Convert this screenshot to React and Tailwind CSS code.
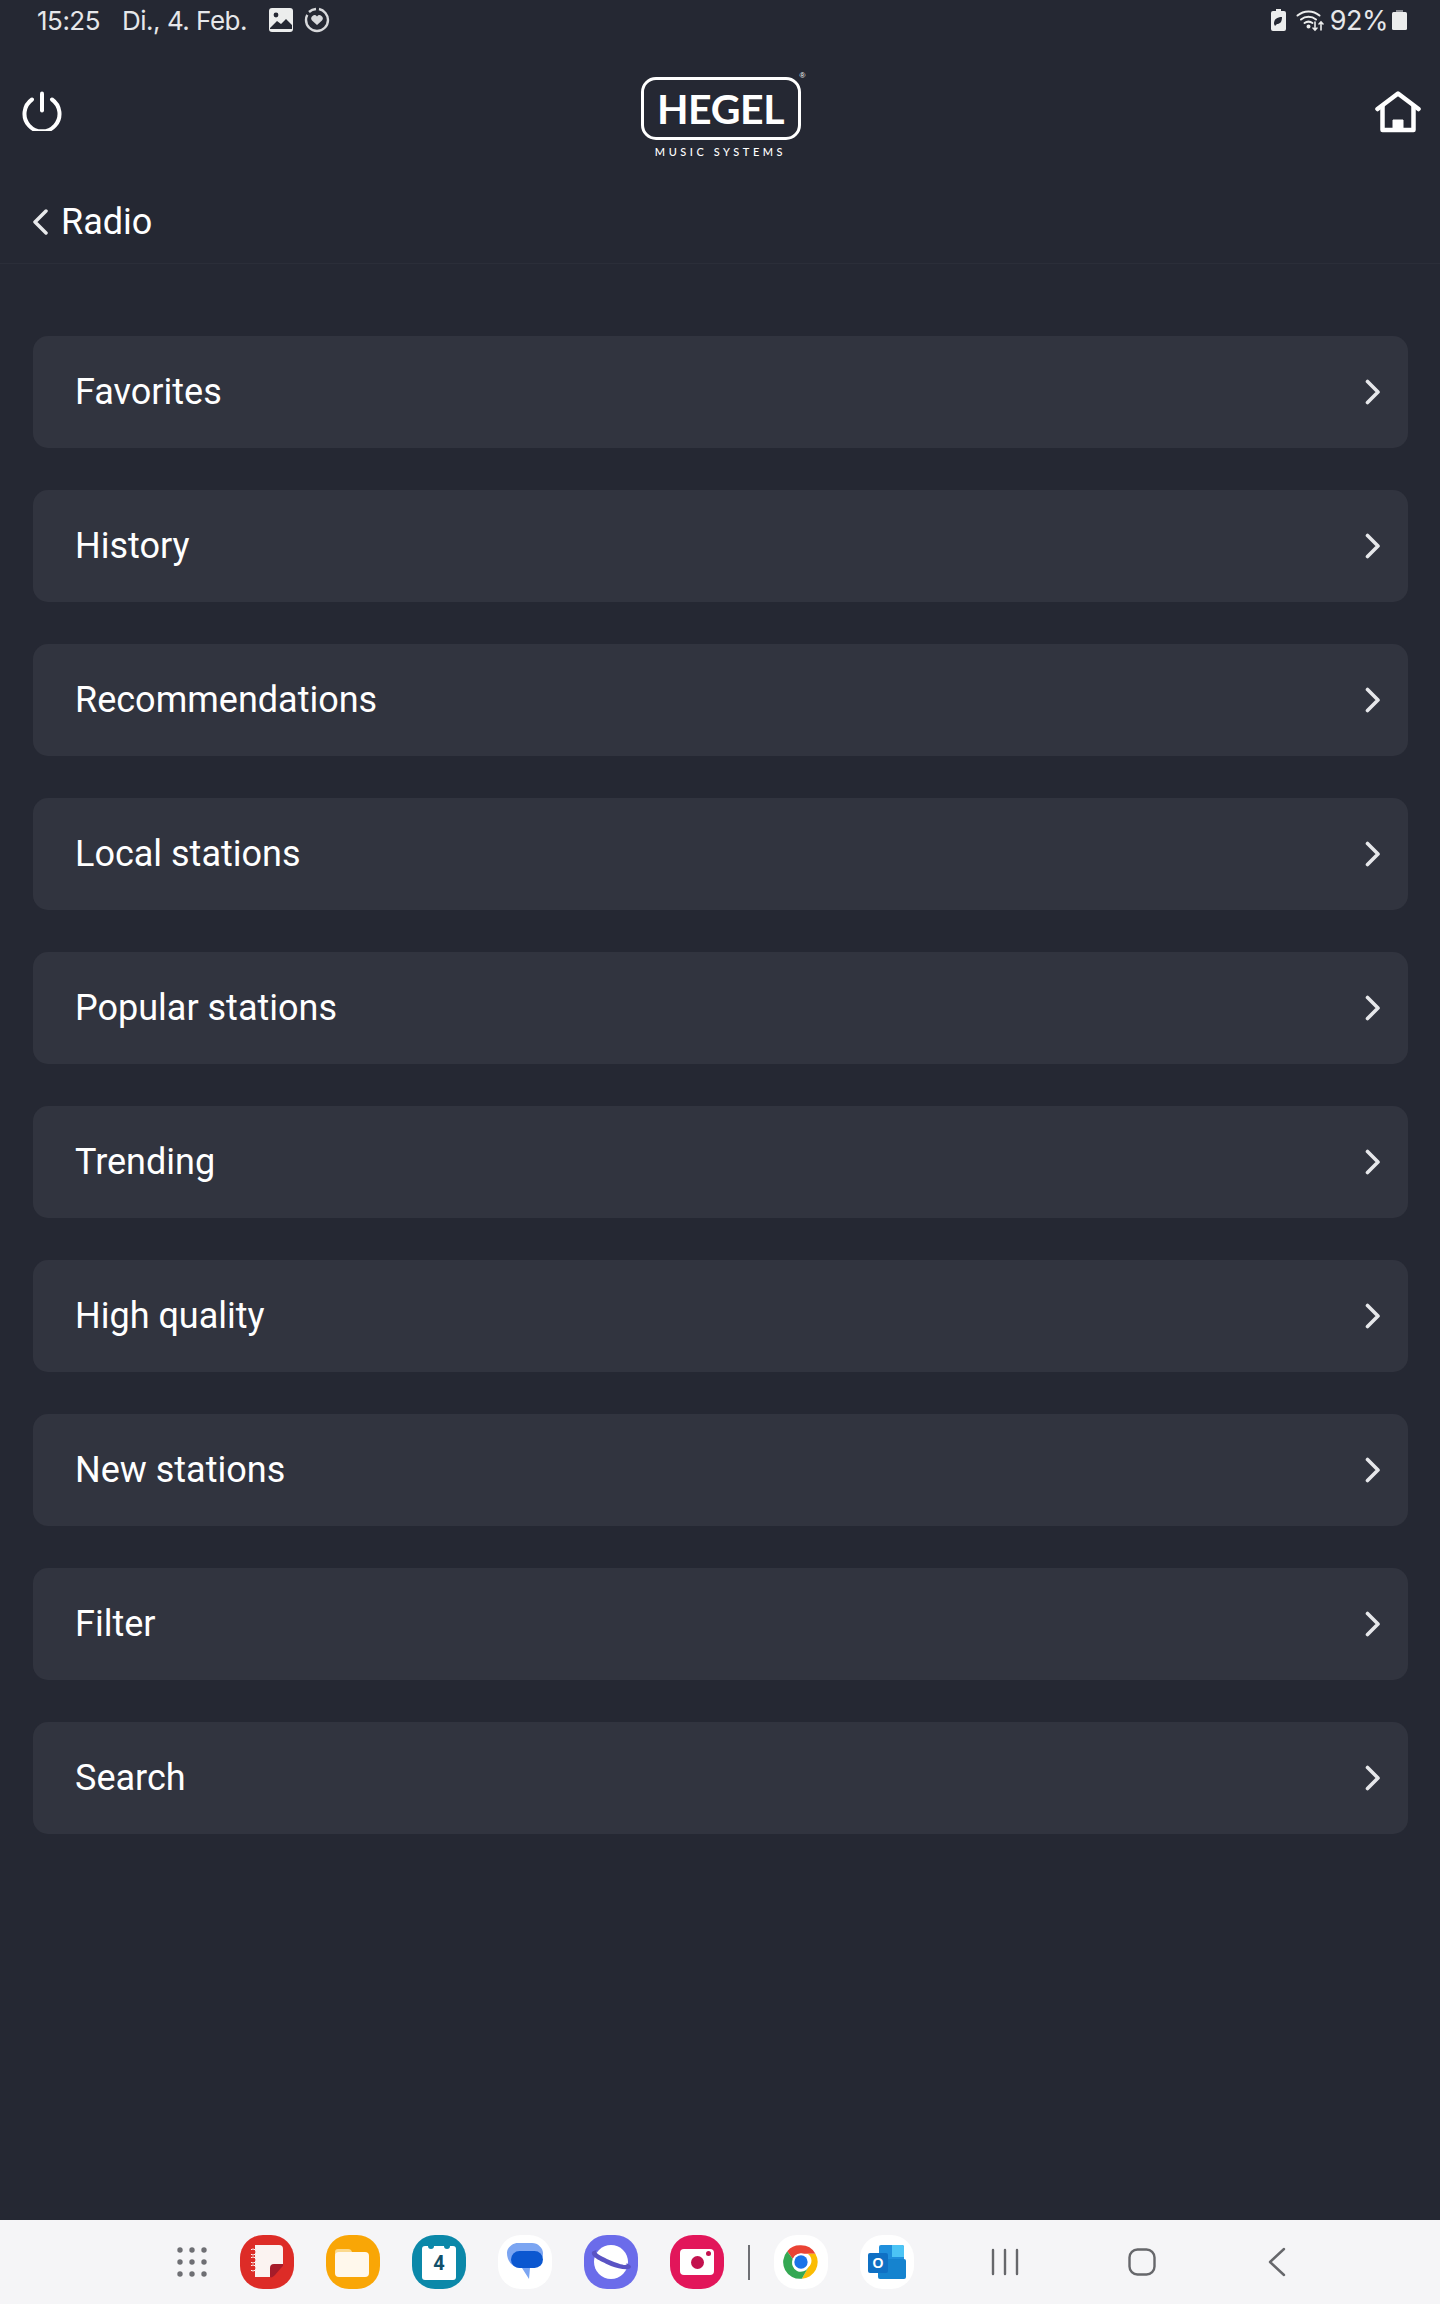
// App.jsx
const MENU_ITEMS = [
  "Favorites",
  "History",
  "Recommendations",
  "Local stations",
  "Popular stations",
  "Trending",
  "High quality",
  "New stations",
  "Filter",
  "Search",
];

function Squircle({ className, children }) {
  return (
    <div className={`w-[54px] h-[54px] rounded-[23px] flex items-center justify-center shrink-0 ${className}`}>
      {children}
    </div>
  );
}

function StatusBar() {
  return (
    <div className="h-[40px] flex items-center justify-between pl-[37px] pr-[33px] text-[#e6e7ea] text-[26px] font-['Inter','Roboto',sans-serif] tracking-[-0.5px]">
      <div className="flex items-center">
        <span>15:25</span>
        <span className="ml-[22px]">Di., 4. Feb.</span>
        <svg className="ml-[22px]" width="24" height="24" viewBox="0 0 24 24">
          <rect width="24" height="24" rx="3" fill="#eceded" />
          <circle cx="7" cy="7" r="2.400" fill="#252833" />
          <path d="M1 20l7-7 4 3 5-5 6 6v4H1z" fill="#252833" />
        </svg>
        <svg className="ml-[11px]" width="26" height="26" viewBox="0 0 26 26" fill="none">
          <path d="M5 5a11.500 11.500 0 0 1 7-3M15 2a11.500 11.500 0 0 1 9 11c0 6-5 11-11 11S2 19 2 13c0-2 .4-3.700 1.300-5.200" stroke="#d8d9dc" strokeWidth="2.400" />
          <path d="M13 18l-5-4.500a3 3 0 0 1 5-4 3 3 0 0 1 5 4z" fill="#d8d9dc" />
        </svg>
      </div>
      <div className="flex items-center">
        <svg width="15" height="22" viewBox="0 0 15 22">
          <path d="M5 0h5v2h3a2 2 0 0 1 2 2v16a2 2 0 0 1-2 2H2a2 2 0 0 1-2-2V4a2 2 0 0 1 2-2h3z" fill="#eceded" />
          <path d="M3 15c0-5 3-7 8-7 0 5-2 7-5 7l-2 2z" fill="#252833" />
        </svg>
        <svg className="ml-[10px]" width="29" height="24" viewBox="0 0 29 24" fill="none" stroke="#eceded" strokeLinecap="round">
          <path d="M1.500 7.500a17 17 0 0 1 22 0M5 11.500a12 12 0 0 1 15 0M8.500 15a7 7 0 0 1 8 0" strokeWidth="2" />
          <circle cx="12.500" cy="18.500" r="1" strokeWidth="2" />
          <path d="M19 14v8M17 20l2 2 2-2M25 22v-8M23 16l2-2 2 2" strokeWidth="1.600" />
        </svg>
        <span className="ml-[5px] text-[27px] leading-[40px] pt-[1px]">92%</span>
        <svg className="ml-[4px]" width="15" height="20" viewBox="0 0 15 20">
          <path d="M4 0h7v2H4z" fill="#8d8f95" />
          <rect y="2" width="15" height="18" rx="1.500" fill="#eceded" />
        </svg>
      </div>
    </div>
  );
}

function TopBar() {
  return (
    <div className="h-[140px] flex items-start justify-between pl-[22px] pr-[19px]">
      <svg className="mt-[51px]" width="40" height="40" viewBox="0 0 40 40" fill="none" stroke="#fff" strokeWidth="4" strokeLinecap="round">
        <path d="M20 2.500v17" />
        <path d="M10 8.500a17.500 17.500 0 1 0 20 0" />
      </svg>
      <div className="mt-[37px] relative w-[160px] flex flex-col items-center ml-[4px]">
        <div className="w-[160px] h-[63px] rounded-[15px] border-[3px] border-white flex items-center justify-center">
          <span className="font-['Lato',sans-serif] font-bold text-white text-[41px] leading-none tracking-[-0.4px]">HEGEL</span>
        </div>
        <span className="absolute -top-[5px] -right-[5px] text-white text-[8px] leading-none font-['Liberation_Sans',sans-serif]">®</span>
        <span className="mt-[5px] font-['Lato',sans-serif] font-medium text-white text-[11px] leading-[14px] tracking-[3.550px] whitespace-nowrap">MUSIC SYSTEMS</span>
      </div>
      <svg className="mt-[51px]" width="46" height="42" viewBox="0 0 46 42" fill="none" stroke="#fff" strokeWidth="4.500" strokeLinejoin="round" strokeLinecap="round">
        <path d="M2.500 18L23 2.500 43.500 18" />
        <path d="M7.500 15v24h31V15" />
        <path d="M18 39V29h10v10z" fill="#fff" strokeWidth="1" />
      </svg>
    </div>
  );
}

function BackBar() {
  return (
    <div className="h-[84px] flex items-center border-b border-[#2b2e39]">
      <svg className="ml-[32px]" width="16" height="26" viewBox="0 0 16 26" fill="none" stroke="#e8e9eb" strokeWidth="3.500" strokeLinecap="round" strokeLinejoin="round">
        <path d="M14 2L3 13l11 11" />
      </svg>
      <span className="ml-[13px] text-white text-[36px] font-['Roboto',sans-serif]">Radio</span>
    </div>
  );
}

function MenuRow({ label }) {
  return (
    <div className="h-[112px] rounded-[15px] bg-[#31343f] flex items-center justify-between pl-[42px] pr-[27px]">
      <span className="text-white text-[36px] font-['Roboto',sans-serif]">{label}</span>
      <svg width="16" height="26" viewBox="0 0 16 26" fill="none" stroke="#e6e7ea" strokeWidth="3.600" strokeLinecap="round" strokeLinejoin="round">
        <path d="M2.500 2.500L13 13 2.500 23.500" />
      </svg>
    </div>
  );
}

function AppsGrid() {
  return (
    <svg width="30" height="30" viewBox="0 0 30 30" fill="#6e6f74" className="shrink-0">
      {[3, 15, 27].map((y) =>
        [3, 15, 27].map((x) => <circle key={`${x}-${y}`} cx={x} cy={y} r="2.700" />)
      )}
    </svg>
  );
}

function NavBar() {
  return (
    <div className="h-[84px] bg-[#f5f5f7] flex items-center pl-[177px]">
      <AppsGrid />
      <Squircle className="ml-[33px] bg-[#dd2c27]">
        <svg width="32" height="34" viewBox="0 0 32 34">
          <path d="M4 0h24a4 4 0 0 1 4 4v15L19 32H4z" fill="#fbf3f1" />
          <path d="M32 19H23a4 4 0 0 0-4 4v9c1 1 3 0 5-2l6-7c2-2 3-3 2-4z" fill="#a61c2a" />
          <circle cx="2" cy="7" r="3" fill="#dd2c27" stroke="#fbf3f1" strokeWidth="1" />
          <circle cx="2" cy="15" r="3" fill="#dd2c27" stroke="#fbf3f1" strokeWidth="1" />
          <circle cx="2" cy="23" r="3" fill="#dd2c27" stroke="#fbf3f1" strokeWidth="1" />
        </svg>
      </Squircle>
      <Squircle className="ml-[32px] bg-[#f9a606]">
        <svg width="36" height="30" viewBox="0 0 36 30">
          <path d="M0 5a3 3 0 0 1 3-3h10a4 4 0 0 1 4 3v3H0z" fill="#fcd98c" />
          <rect y="5" width="34" height="25" rx="4" fill="#fff8ec" />
        </svg>
      </Squircle>
      <Squircle className="ml-[32px] bg-[#0b88a9]">
        <div className="relative w-[34px] h-[34px] mt-[2px] rounded-[3px] bg-white flex items-center justify-center">
          <span className="text-[#11506b] text-[20px] font-bold font-['Roboto',sans-serif]">4</span>
          <span className="absolute -top-[1px] left-[6px] w-[6px] h-[4px] rounded-b-full bg-[#0b88a9]" />
          <span className="absolute -top-[1px] right-[6px] w-[6px] h-[4px] rounded-b-full bg-[#0b88a9]" />
        </div>
      </Squircle>
      <Squircle className="ml-[32px] bg-white">
        <svg width="38" height="38" viewBox="0 0 38 38">
          <path d="M12 0h14c6 0 11 5 11 10 0 8-5 15-11 15h-2l-1 11-7-11h-2C8 25 1 19 1 10 1 5 6 0 12 0z" fill="#7ba5f2" />
          <rect x="5" y="8" width="32" height="17" rx="8.500" fill="#0b57d0" />
        </svg>
      </Squircle>
      <Squircle className="ml-[32px] bg-[#6b6cea]">
        <svg width="42" height="36" viewBox="0 0 42 36">
          <circle cx="21" cy="18" r="17" fill="#fff" />
          <path d="M2 8c-2 5 11 10 19 14 8 3 19 5 20 1 0-2-3-3-5-4 1 1 1 2-1 2-5 0-27-9-29-13 0-1 0-2 2-2-3 0-5 1-6 2z" fill="#5a53c4" />
        </svg>
      </Squircle>
      <Squircle className="ml-[32px] bg-[#e2165a]">
        <div className="relative w-[34px] h-[26px] rounded-[4px] bg-white flex items-center justify-center">
          <span className="w-[13px] h-[13px] rounded-full bg-[#c3124e]" />
          <span className="absolute top-[2px] right-[3px] w-[5px] h-[5px] rounded-full bg-[#c3124e]" />
        </div>
      </Squircle>
      <div className="ml-[24px] w-[2px] h-[35px] bg-[#6e6f74]" />
      <Squircle className="ml-[24px] bg-white">
        <svg width="40" height="40" viewBox="0 0 48 48">
          <path d="M24 4a20 20 0 0 1 17.320 10H24a10 10 0 0 0-9.500 7L7.500 11A20 20 0 0 1 24 4z" fill="#ea4335" />
          <path d="M41.320 14A20 20 0 0 1 25 44l8-14a10 10 0 0 0-1-16z" fill="#fbbc04" />
          <path d="M7.500 11A20 20 0 0 0 25 44l8-14a10 10 0 0 1-18.500-9z" fill="#34a853" />
          <circle cx="24" cy="24" r="10.500" fill="#fff" />
          <circle cx="24" cy="24" r="8" fill="#1a73e8" />
        </svg>
      </Squircle>
      <Squircle className="ml-[32px] bg-white">
        <div className="relative w-[38px] h-[34px]">
          <div className="absolute top-0 left-[11px] right-[2px] bottom-[10px] bg-[#1f8fdc] rounded-[2px]" />
          <div className="absolute top-0 left-[24px] right-[2px] h-[12px] bg-[#4cc4f5] rounded-tr-[2px]" />
          <div className="absolute top-[14px] left-[10px] right-0 bottom-0 bg-[#1583cf] rounded-[2px]" />
          <div className="absolute top-[8px] left-0 w-[20px] h-[20px] bg-[#0f70c4] rounded-[2px] flex items-center justify-center text-white text-[14px] font-bold leading-none font-['Liberation_Sans',sans-serif]">O</div>
        </div>
      </Squircle>
      <svg className="ml-[77px]" width="28" height="28" viewBox="0 0 28 28" stroke="#66676b" strokeWidth="2.400" strokeLinecap="round">
        <path d="M2 2v24M14 2v24M26 2v24" />
      </svg>
      <svg className="ml-[109px]" width="28" height="28" viewBox="0 0 28 28" fill="none" stroke="#66676b" strokeWidth="2.400">
        <rect x="1.500" y="1.500" width="25" height="25" rx="8" />
      </svg>
      <svg className="ml-[112px]" width="18" height="30" viewBox="0 0 18 30" fill="none" stroke="#66676b" strokeWidth="2.400" strokeLinecap="round" strokeLinejoin="round">
        <path d="M16 2L2 15l14 13" />
      </svg>
    </div>
  );
}

export default function App() {
  return (
    <div className="h-[2304px] flex flex-col bg-[#252833]">
      <StatusBar />
      <TopBar />
      <BackBar />
      <div className="flex-1 flex flex-col gap-[42px] pt-[72px] pl-[33px] pr-[32px]">
        {MENU_ITEMS.map((label) => (
          <MenuRow key={label} label={label} />
        ))}
      </div>
      <NavBar />
    </div>
  );
}
